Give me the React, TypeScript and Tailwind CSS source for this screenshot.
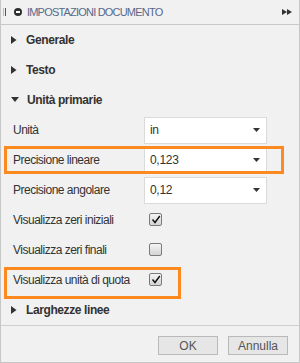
import React from "react";

const Caret = ({ open }: { open?: boolean }) =>
  open ? (
    <svg width="8" height="6" viewBox="0 0 8 6" className="ml-[10px] mr-[8px]">
      <path d="M0 0 L8 0 L4 5 Z" fill="#333" />
    </svg>
  ) : (
    <svg width="6" height="8" viewBox="0 0 6 8" className="ml-[10px] mr-[9px]">
      <path d="M0 0 L5.5 4 L0 8 Z" fill="#333" />
    </svg>
  );

const Section = ({ title, open }: { title: string; open?: boolean }) => (
  <div className="h-[30px] shrink-0 flex items-center">
    <Caret open={open} />
    <span className="text-[12px] font-bold text-[#333] tracking-[-0.4px]">{title}</span>
  </div>
);

const Select = ({ value }: { value: string }) => (
  <div className="w-[123px] h-[27px] bg-white border border-[#dadada] flex items-center justify-between pl-[5px] pr-[6px]">
    <span className="text-[12px] text-[#333] tracking-[-0.3px]">{value}</span>
    <svg width="7" height="4" viewBox="0 0 7 4">
      <path d="M0 0 L7 0 L3.5 4 Z" fill="#333" />
    </svg>
  </div>
);

const Check = ({ checked }: { checked?: boolean }) => (
  <div className="w-[13px] h-[13px] rounded-[2px] border border-[#7a7a7a] bg-gradient-to-b from-[#f4f4f4] to-[#d4d4d4] flex items-center justify-center">
    {checked && (
      <svg width="10" height="9" viewBox="0 0 10 9">
        <path d="M1.5 4.5 L4 7.5 L8.8 1" stroke="#111" strokeWidth="1.4" fill="none" />
      </svg>
    )}
  </div>
);

const Row = ({
  label,
  children,
  highlight,
}: {
  label: string;
  children: React.ReactNode;
  highlight?: string;
}) => (
  <div className="relative h-[30px] shrink-0 flex items-center">
    <span className="w-[143px] shrink-0 whitespace-nowrap pl-[12px] text-[12px] text-[#333] tracking-[-0.5px]">
      {label}
    </span>
    {children}
    {highlight && <div className={highlight} />}
  </div>
);

export default function App() {
  return (
    <div
      className="w-[300px] h-[363px] bg-[#f1f1f1] border-l border-r border-b border-[#c6c6c6] flex flex-col"
      style={{ fontFamily: '"Liberation Sans", Arial, sans-serif' }}
    >
      <div className="h-[25px] shrink-0 border-b border-[#c9c9c9] flex items-center">
        <div className="ml-[2px] flex gap-[1px] h-[8px]">
          <div className="w-[1px] bg-[#bbb]" />
          <div className="w-[1px] bg-[#555]" />
        </div>
        <div className="ml-[8px] w-[8px] h-[8px] rounded-full bg-[#2e2e2e] flex items-center justify-center">
          <div className="w-[4px] h-[1.5px] bg-white" />
        </div>
        <span className="ml-[5px] text-[11px] text-[#58688a] tracking-[-0.8px]">
          IMPOSTAZIONI DOCUMENTO
        </span>
        <svg width="10" height="6" viewBox="0 0 10 6" className="ml-auto mr-[7px]">
          <path d="M0 0 L5 3 L0 6 Z M5 0 L10 3 L5 6 Z" fill="#333" />
        </svg>
      </div>

      <Section title="Generale" />
      <Section title="Testo" />
      <Section title="Unità primarie" open />

      <Row label="Unità">
        <Select value="in" />
      </Row>
      <Row
        label="Precisione lineare"
        highlight="absolute left-[3px] top-[1px] w-[280px] h-[28px] border-[3px] border-[#fd8a1e]"
      >
        <Select value="0,123" />
      </Row>
      <Row label="Precisione angolare">
        <Select value="0,12" />
      </Row>
      <Row label="Visualizza zeri iniziali">
        <div className="ml-[5px] mt-[-2px]">
          <Check checked />
        </div>
      </Row>
      <Row label="Visualizza zeri finali">
        <div className="ml-[5px] mt-[-2px]">
          <Check />
        </div>
      </Row>
      <Row
        label="Visualizza unità di quota"
        highlight="absolute left-[3px] top-[2px] w-[177px] h-[32px] border-[3px] border-[#fd8a1e]"
      >
        <div className="ml-[5px] mt-[-2px]">
          <Check checked />
        </div>
      </Row>

      <Section title="Larghezze linee" />

      <div className="border-t border-[#cfcfcf] flex-1 flex justify-end items-start pt-[10px] pr-[11px] gap-[10px]">
        <button className="w-[60px] h-[19px] bg-[#e6e6e6] border border-[#b9b9b9] text-[12px] text-[#555] leading-none">
          OK
        </button>
        <button className="w-[60px] h-[19px] bg-[#e6e6e6] border border-[#b9b9b9] text-[12px] text-[#555] leading-none">
          Annulla
        </button>
      </div>
    </div>
  );
}
